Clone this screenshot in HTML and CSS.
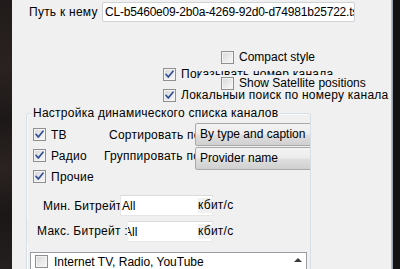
FILE: index.html
```html
<!DOCTYPE html>
<html lang="ru">
<head>
<meta charset="utf-8">
<link rel="stylesheet" href="styles.css">
</head>
<body>
<div class="screen">
  <div class="desk"></div>
  <div class="panel">
    <div class="path-row">
      <span class="path-lbl">Путь к нему</span>
      <div class="field path-field">CL-b5460e09-2b0a-4269-92d0-d74981b25722.ts</div>
    </div>

    <div class="opt compact latin"><span class="cb"></span><span>Compact style</span></div>

    <div class="opts-block">
      <div class="opt ch"><span class="cb"><svg viewBox="0 0 13 13"><path d="M3 6.3 L5.3 9 L10 3.2"/></svg></span><span>Показывать номер канала</span></div>
      <div class="opt ch local"><span class="cb"><svg viewBox="0 0 13 13"><path d="M3 6.3 L5.3 9 L10 3.2"/></svg></span><span>Локальный поиск по номеру канала</span></div>
      <div class="sat latin"><span class="cb"></span><span>Show Satellite positions</span></div>
    </div>

    <div class="group">
      <div class="group-title">Настройка динамического списка каналов</div>
      <div class="group-body">
        <div class="grow r1">
          <div class="chk-cell"><span class="cb"><svg viewBox="0 0 13 13"><path d="M3 6.3 L5.3 9 L10 3.2"/></svg></span><span>ТВ</span></div>
          <div class="side-lbl sort">Сортировать по:</div>
          <div class="combo c1 latin">By type and caption</div>
        </div>
        <div class="grow r2">
          <div class="chk-cell"><span class="cb"><svg viewBox="0 0 13 13"><path d="M3 6.3 L5.3 9 L10 3.2"/></svg></span><span>Радио</span></div>
          <div class="side-lbl grp">Группировать по:</div>
          <div class="combo c2 latin">Provider name</div>
        </div>
        <div class="grow r3">
          <div class="chk-cell"><span class="cb"><svg viewBox="0 0 13 13"><path d="M3 6.3 L5.3 9 L10 3.2"/></svg></span><span>Прочие</span></div>
        </div>

        <div class="brow bmin">
          <span class="br-lbl min-lbl">Мин. Битрейт</span>
          <div class="field br-field min-field latin">All</div>
          <span class="unit">кбит/с</span>
        </div>
        <div class="brow bmax">
          <span class="br-lbl max-lbl">Макс. Битрейт :</span>
          <div class="field br-field max-field latin">All</div>
          <span class="unit">кбит/с</span>
        </div>

        <div class="listbox">
          <div class="list-item latin"><span class="cb"></span><span>Internet TV, Radio, YouTube</span></div>
          <div class="scroll"><span class="arrow-up"></span></div>
        </div>
      </div>
    </div>
  </div>
  <div class="edge"></div>
  <div class="outside"></div>
</div>
</body>
</html>
```

FILE: styles.css
```css
html, body {
  margin: 0;
  padding: 0;
  width: 400px;
  height: 269px;
  overflow: hidden;
  background: #151313;
}

.screen {
  display: flex;
  width: 400px;
  height: 269px;
  overflow: hidden;
  font-family: "Liberation Sans", Arial, sans-serif;
  font-size: 12px;
  color: #000;
}

.desk {
  width: 12px;
  flex: none;
  background: linear-gradient(180deg, #201b1a 0%, #2a2221 25%, #1d1818 45%, #2b2322 62%, #1b1717 80%, #242020 100%);
}

.panel {
  width: 379px;
  height: 269px;
  overflow: hidden;
  flex: none;
  background: #f0f0f0;
  padding-top: 2px;
  box-sizing: border-box;
  letter-spacing: 0.25px;
}

.latin {
  letter-spacing: 0;
}

.edge {
  width: 2px;
  flex: none;
  background: linear-gradient(90deg, #c3cbd6, #8c96a3);
}

.outside {
  width: 7px;
  flex: none;
  background: #121212;
}

/* path row */
.path-row {
  display: flex;
  align-items: center;
  height: 20px;
  padding-left: 17px;
}

.path-lbl {
  width: 73px;
  flex: none;
  white-space: nowrap;
}

.field {
  box-sizing: border-box;
  background: #fff;
  white-space: nowrap;
  overflow: hidden;
}

.path-field {
  width: 253px;
  height: 20px;
  line-height: 18px;
  border: 1px solid #cfd2d6;
  border-radius: 2px;
  padding-left: 2px;
  letter-spacing: -0.2px;
}

/* checkboxes */
.cb {
  width: 13px;
  height: 13px;
  flex: none;
  box-sizing: border-box;
  border: 1px solid #8e8f8f;
  background: linear-gradient(135deg, #d6d6d6 0%, #eaeaea 55%, #f9f9f9 100%);
  box-shadow: inset 0 0 0 1px #f4f4f4;
  display: flex;
  align-items: center;
  justify-content: center;
}

.cb svg {
  width: 13px;
  height: 13px;
  flex: none;
  margin: -1px;
}

.cb path {
  fill: none;
  stroke: #2f4e96;
  stroke-width: 1.7;
  stroke-linecap: round;
  stroke-linejoin: round;
}

.opt {
  display: flex;
  align-items: center;
  gap: 5px;
  height: 14px;
  white-space: nowrap;
}

.compact {
  margin-top: 28px;
  margin-left: 209px;
}

.opts-block {
  position: relative;
  margin-top: 3px;
}

.opt.ch {
  margin-left: 151px;
}

.opt.local {
  margin-top: 7px;
}

.sat {
  position: absolute;
  top: 8px;
  left: 188px;
  right: 0;
  height: 16px;
  background: #f0f0f0;
  display: flex;
  align-items: center;
  gap: 5px;
  padding-left: 21px;
  white-space: nowrap;
}

/* group box */
.group {
  margin-top: 11px;
  margin-left: 14px;
  width: 285px;
  height: 170px;
  box-sizing: border-box;
  border: 1px solid #d5dfe5;
  border-radius: 3px;
  box-shadow: inset 1px 1px 0 #fbfbfb;
}

.group-title {
  width: fit-content;
  margin: -8px 0 0 4px;
  padding: 0 2px;
  line-height: 14px;
  background: #f0f0f0;
  white-space: nowrap;
}

.group-body {
  overflow: hidden;
  padding-top: 4px;
  height: 160px;
}

.grow {
  display: flex;
  align-items: center;
  height: 21px;
}

.chk-cell {
  width: 73px;
  flex: none;
  box-sizing: border-box;
  padding-left: 6px;
  display: flex;
  align-items: center;
  gap: 5px;
}

.side-lbl {
  width: 95px;
  flex: none;
  box-sizing: border-box;
  white-space: nowrap;
  overflow: hidden;
}

.side-lbl.sort { padding-left: 9px; }
.side-lbl.grp { padding-left: 4px; }

.combo {
  width: 160px;
  height: 23px;
  flex: none;
  box-sizing: border-box;
  align-self: flex-start;
  border: 1px solid #a9a9a9;
  border-radius: 2px;
  padding-left: 4px;
  line-height: 21px;
  white-space: nowrap;
  background: linear-gradient(180deg, #f3f3f3 0%, #ececec 45%, #dedede 55%, #d0d0d0 100%);
}

.combo.c1 { margin-top: -1px; }
.combo.c2 { margin-top: 2px; }

/* bitrate rows */
.brow {
  display: flex;
  align-items: center;
  height: 21px;
}

.bmin { margin-top: 8px; }
.bmax { margin-top: 5px; }

.br-lbl {
  flex: none;
  box-sizing: border-box;
  white-space: nowrap;
}

.min-lbl {
  width: 93px;
  padding-left: 16px;
}

.max-lbl {
  width: 101px;
  padding-left: 10px;
  position: relative;
  z-index: 1;
  background: #f0f0f0;
  line-height: 21px;
}

.br-field {
  flex: none;
  height: 21px;
  line-height: 20px;
  border: 1px solid #e6e6e6;
  border-top-color: #dadada;
  padding-left: 1px;
}

.min-field { width: 93px; }
.max-field { width: 91px; margin-left: -6px; }

.unit {
  position: relative;
  z-index: 1;
  margin-left: -15px;
  padding-right: 4px;
  line-height: 15px;
  background: #f0f0f0;
  white-space: nowrap;
}

/* list */
.listbox {
  margin: 10px 0 0 3px;
  width: 277px;
  height: 30px;
  box-sizing: border-box;
  border: 1px solid #9a9da3;
  background: #fff;
  display: flex;
}

.list-item {
  flex: 1;
  display: flex;
  align-items: flex-start;
  gap: 6px;
  padding: 2px 0 0 4px;
  white-space: nowrap;
  line-height: 14px;
}

.scroll {
  width: 17px;
  flex: none;
  display: flex;
  justify-content: center;
  padding-top: 5px;
  box-sizing: border-box;
}

.arrow-up {
  width: 0;
  height: 0;
  border-left: 4px solid transparent;
  border-right: 4px solid transparent;
  border-bottom: 4px solid #3a3a3a;
}
```
